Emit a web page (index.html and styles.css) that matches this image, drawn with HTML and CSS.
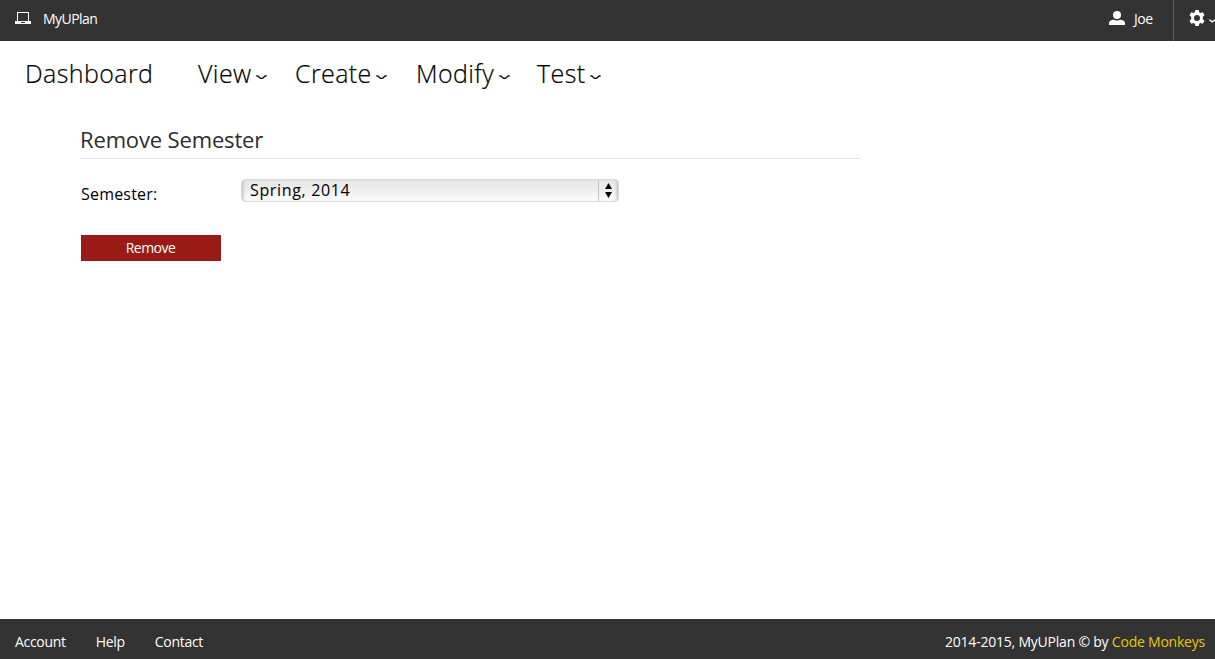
FILE: index.html
```html
<!DOCTYPE html>
<html lang="en">
<head>
<meta charset="utf-8">
<title>MyUPlan</title>
<link rel="stylesheet" href="styles.css">
</head>
<body>
<header class="topbar">
  <a class="brand">
    <svg class="laptop" width="16" height="12" viewBox="0 0 16 12"><path fill="#fff" fill-rule="evenodd" d="M2 0h12v9h2v3H0V9h2zM3 1v8h10V1zM6 10v1h4v-1z"/></svg>
    <span class="brand-name">MyUPlan</span>
  </a>
  <a class="user">
    <svg width="16" height="14" viewBox="0 0 16 14"><path fill="#fff" d="M8 0a4 4 0 0 1 0 8a4 4 0 0 1 0-8zM0 14v-2c0-2 2.200-3 4.500-3.300Q8 10.300 11.500 8.700C13.800 9 16 10 16 12v2z"/></svg>
    <span class="user-name">Joe</span>
  </a>
  <a class="settings">
    <svg width="16" height="16" viewBox="0 0 16 16"><path fill="#fff" fill-rule="evenodd" d="M6.300 0h3.400l.5 2.300 1.400.8 2.200-.8 1.700 3-1.700 1.500v2.400l1.700 1.500-1.700 3-2.200-.8-1.400.8-.5 2.300H6.300l-.5-2.300-1.400-.8-2.200.8-1.700-3 1.700-1.500V6.800L.5 5.300l1.700-3 2.200.8 1.400-.8zM8 5a3 3 0 0 0 0 6a3 3 0 0 0 0-6z"/></svg>
    <svg class="settings-caret" width="7" height="4" viewBox="0 0 7 4"><path fill="none" stroke="#fff" stroke-width="1.400" d="M.3.7 3.200 2.900 6.200.7"/></svg>
  </a>
</header>
<nav class="menu">
  <a class="item dashboard">Dashboard</a>
  <a class="item view">View<svg class="caret" width="11" height="5" viewBox="0 0 11 5"><path d="M.3.9H1.800L4.600 3.400H6.400L9.200.9H10.700"/></svg></a>
  <a class="item create">Create<svg class="caret" width="11" height="5" viewBox="0 0 11 5"><path d="M.3.9H1.800L4.600 3.400H6.400L9.200.9H10.700"/></svg></a>
  <a class="item modify">Modify<svg class="caret" width="11" height="5" viewBox="0 0 11 5"><path d="M.3.9H1.800L4.600 3.400H6.400L9.200.9H10.700"/></svg></a>
  <a class="item test">Test<svg class="caret" width="11" height="5" viewBox="0 0 11 5"><path d="M.3.9H1.800L4.600 3.400H6.400L9.200.9H10.700"/></svg></a>
</nav>
<main class="content">
  <h1 class="title">Remove Semester</h1>
  <div class="field">
    <span class="label">Semester:</span>
    <div class="select">
      <span class="value">Spring, 2014</span>
      <span class="stepper"><svg width="7" height="15" viewBox="0 0 7 15"><path d="M3.500 0 7 6H0zM0 9h7L3.500 15z"/></svg></span>
    </div>
  </div>
  <button class="remove">Remove</button>
</main>
<footer class="footer">
  <div class="links"><a class="account">Account</a><a class="help">Help</a><a class="contact">Contact</a></div>
  <div class="copyright"><span class="owner">2014-2015, MyUPlan © by</span> <a class="credit">Code Monkeys</a></div>
</footer>
</body>
</html>
```
FILE: styles.css
```css
* { box-sizing: border-box; }
body {
  margin: 0;
  height: 659px;
  display: flex;
  flex-direction: column;
  overflow: hidden;
  background: #fff;
  color: #000;
  font-family: "Open Sans", sans-serif;
  font-size: 14px;
}
svg { display: block; flex: none; }
.topbar {
  height: 41px;
  flex: none;
  display: flex;
  background: #333;
  color: #fff;
  line-height: 20px;
  letter-spacing: -0.55px;
}
.brand { display: flex; padding: 9px 0 0 15px; }
.laptop { margin: 3px 12px 0 0; }
.user { display: flex; margin-left: auto; padding: 9px 20.500px 0 0; }
.user svg { margin: 2px 9px 0 0; }
.settings {
  width: 42px;
  display: flex;
  padding: 10px 0 0 15px;
  border-left: 1px solid #5a5a5a;
  overflow: hidden;
}
.settings-caret { margin: 9px 0 0 4px; }
.menu {
  height: 78px;
  flex: none;
  display: flex;
  padding: 15px 0 0 25px;
  font-size: 25px;
  font-weight: 300;
  line-height: 34px;
  letter-spacing: 0.4px;
  -webkit-text-stroke: 0.2px #000;
}
.item { display: flex; white-space: nowrap; }
.dashboard { width: 173px; }
.view { width: 97px; }
.create { width: 121px; }
.modify { width: 121px; }
.caret { margin: 19px 0 0 4.500px; fill: none; stroke: #000; stroke-width: 1.400; }
.content { flex: 1; padding: 4px 0 0 80px; }
.title {
  width: 780px;
  height: 36px;
  margin: 0;
  border-bottom: 1px solid #e3e3e3;
  color: #2d2d2d;
  font-size: 22px;
  font-weight: 400;
  line-height: 32px;
  letter-spacing: -0.15px;
}
.field { display: flex; height: 76px; padding-top: 20px; font-size: 16px; }
.label { width: 161px; padding-left: 1px; line-height: 30px; letter-spacing: 0.2px; }
.select {
  width: 378px;
  height: 23px;
  display: flex;
  border: 1px solid #d9d9d9;
  border-radius: 4px;
  background: linear-gradient(#e6e6e6, #eee 50%, #fdfdfd);
  box-shadow: inset 3px 0 3px -2px #bbb, inset -3px 0 3px -2px #bbb;
  line-height: 21px;
}
.value { flex: 1; padding-left: 8px; letter-spacing: 0.65px; }
.stepper { width: 20px; padding: 3px 0 0 6px; border-left: 1px solid #c4c4c4; }
.remove {
  width: 140px;
  height: 26px;
  margin: 0 0 0 1px;
  padding: 0 1px 0 0;
  display: block;
  border: 0;
  background: #9a1b16;
  color: #fff;
  font: 14px/26px "Open Sans", sans-serif;
  letter-spacing: -0.5px;
}
.footer {
  height: 40px;
  flex: none;
  display: flex;
  justify-content: space-between;
  padding: 13px 10px 0 15px;
  background: #333;
  color: #fff;
  line-height: 20px;
  letter-spacing: -0.22px;
}
.links { display: flex; gap: 30px; letter-spacing: -0.3px; }
.credit { color: #e8c800; }
```
